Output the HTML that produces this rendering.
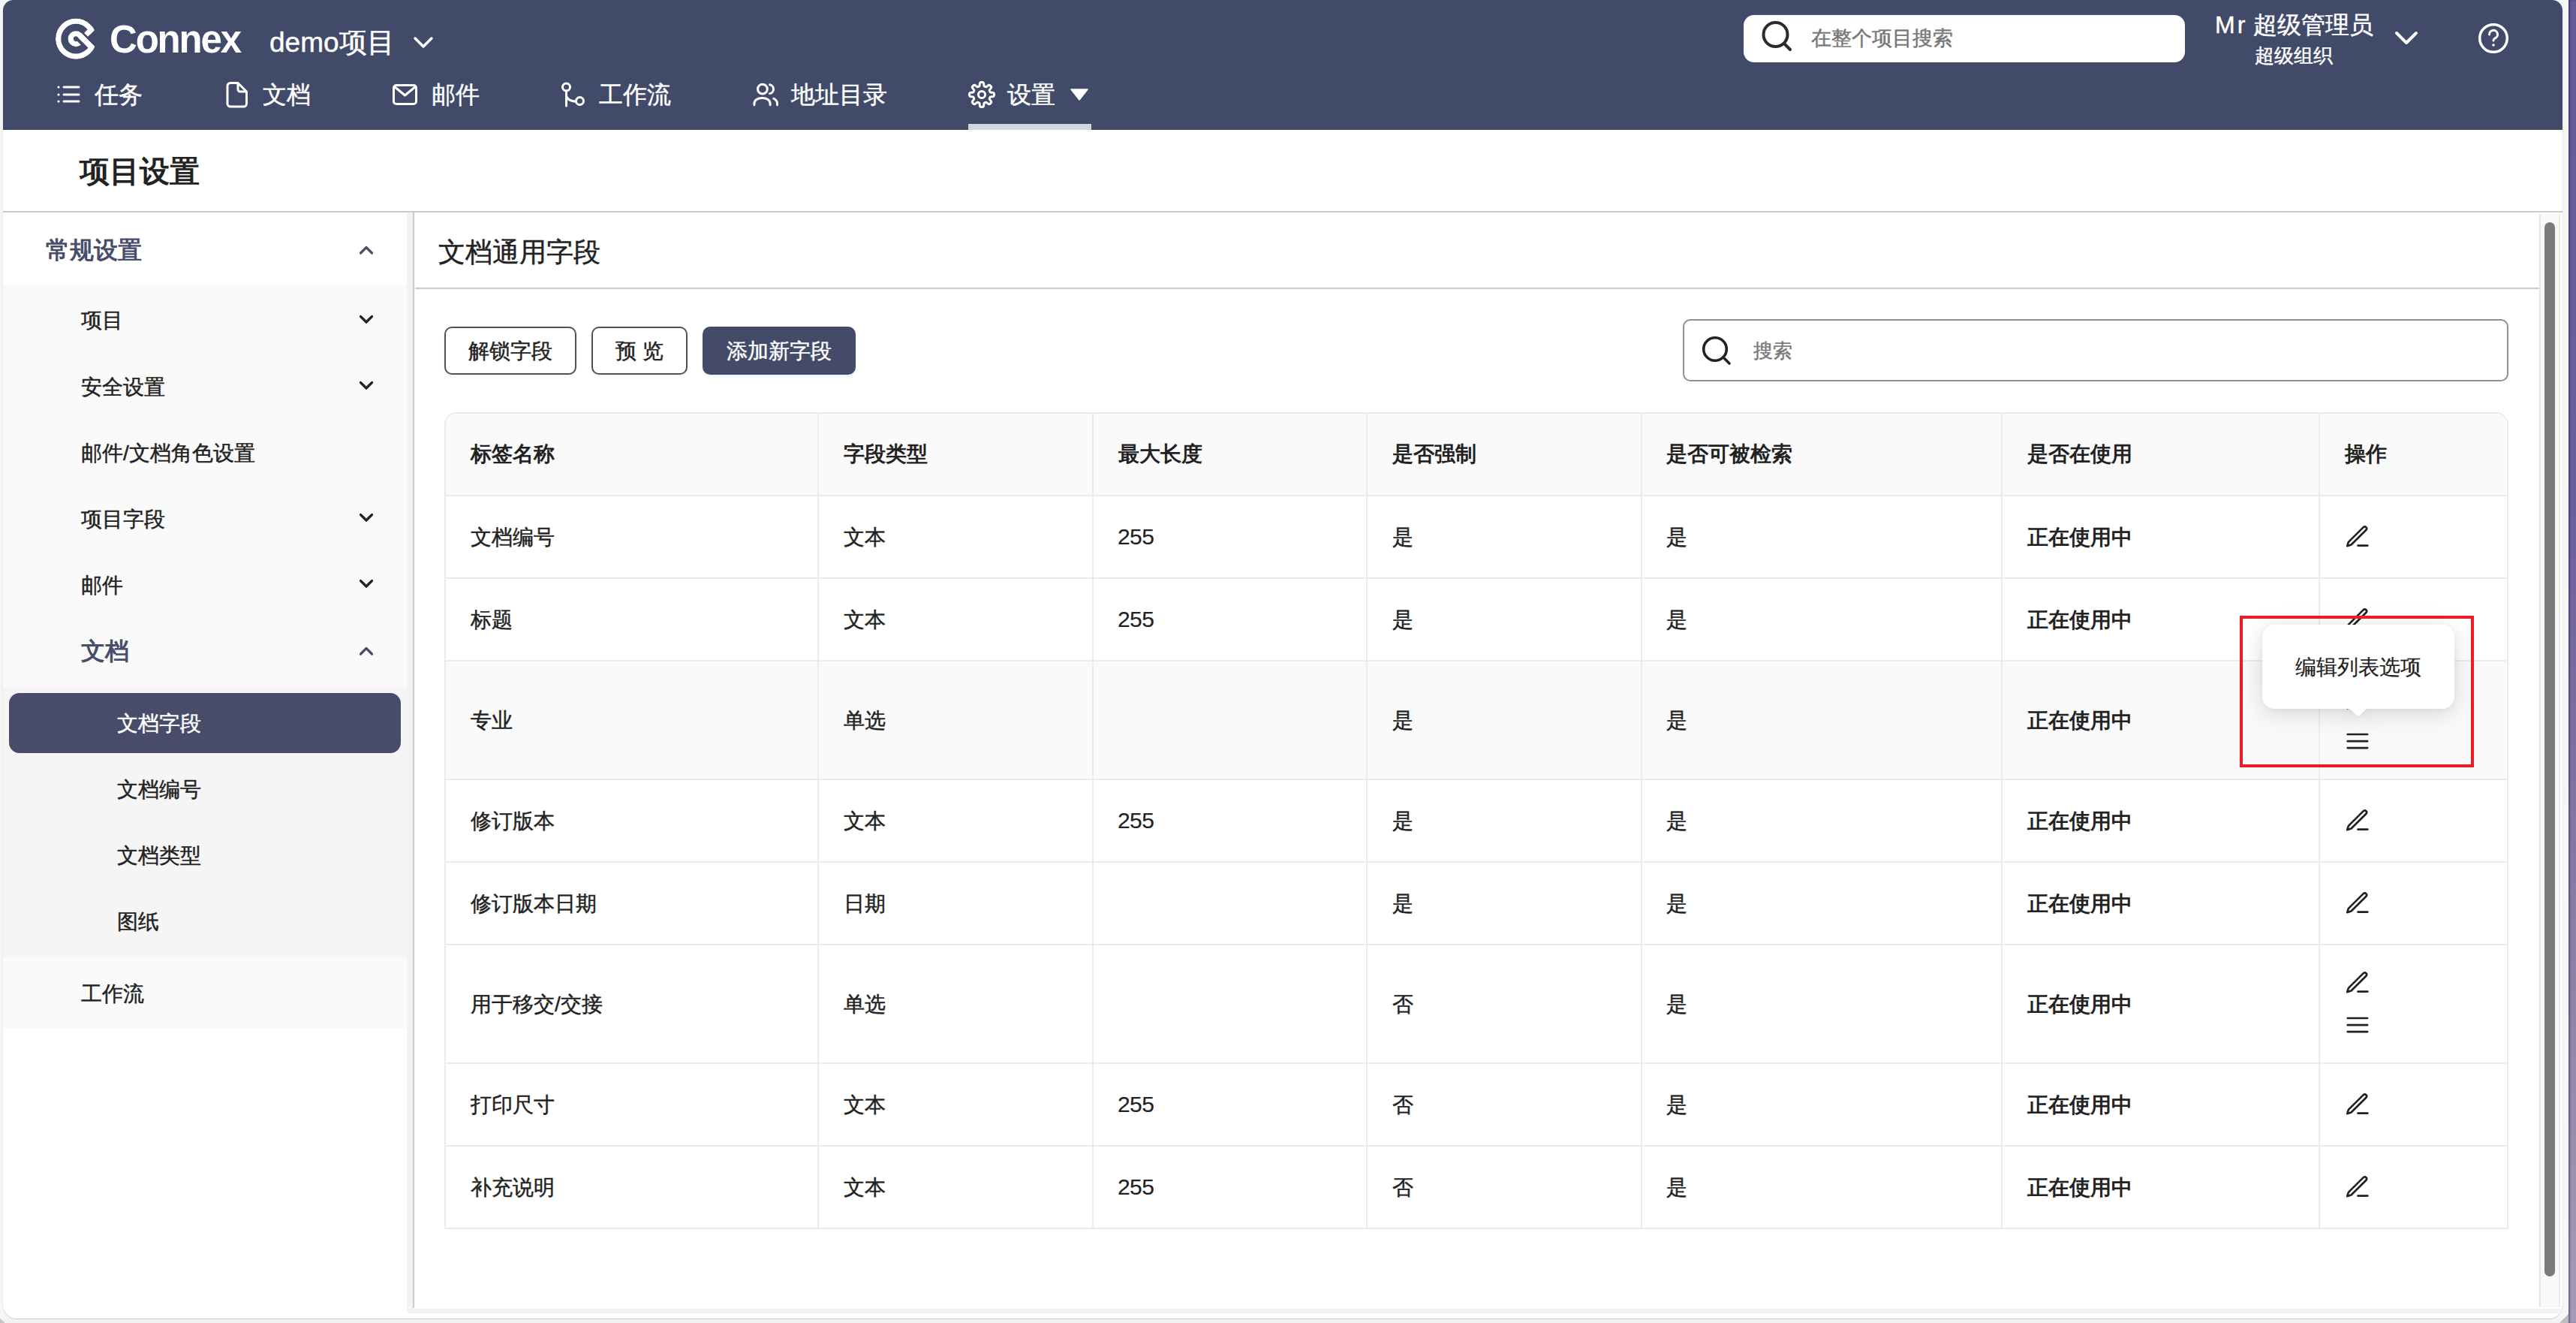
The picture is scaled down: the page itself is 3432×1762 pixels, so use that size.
<!DOCTYPE html>
<html><head><meta charset="utf-8">
<style>
*{box-sizing:border-box;margin:0;padding:0}
html,body{width:3432px;height:1762px;overflow:hidden;background:#f2f2f2;font-family:"Liberation Sans",sans-serif;color:#222}
.a{position:absolute}
.t{position:absolute;white-space:nowrap;line-height:1;-webkit-text-stroke:0.45px currentColor}
.hd,.inuse,.bw{-webkit-text-stroke:0}
#purple{left:3422px;top:0;width:10px;height:1762px;background:linear-gradient(#65599a,#6d609f 40%,#8d83a8 75%,#a49cb6);box-shadow:inset 2px 0 2px rgba(30,20,60,.4)}
#outer{left:0;top:0;width:3422px;height:1756px;background:#f6f6f6}
#win{left:4px;top:0;width:3410px;height:1756px;background:#fff;border-radius:14px 14px 18px 18px;box-shadow:0 1px 1px rgba(0,0,0,.14),0 0 0 1px rgba(0,0,0,.04)}
#hdr{left:4px;top:0;width:3410px;height:173px;background:#414a68;border-radius:14px 14px 0 0}
.w{color:#fff}
.nav{font-size:32px;color:#fff}
.side{font-size:28px;color:#222}
.cell{font-size:28px;color:#222}
.hd{font-size:28px;font-weight:bold;color:#222}
.inuse{font-size:28px;font-weight:bold;color:#222}
.hl{background:#ebebeb}
.num{font-size:30px;letter-spacing:-0.6px;margin-top:-2px;margin-left:-1px;-webkit-text-stroke:0.15px currentColor}
</style></head><body>
<div class="a" id="outer"></div>
<div class="a" id="purple"></div>
<div class="a" id="win"></div>
<div class="a" id="hdr"></div>
<svg class="a" style="left:0;top:1740px" width="20" height="22" viewBox="0 1740 20 22"><polygon points="0,1756 7,1762 0,1762" fill="#c4c4c4"/></svg>
<svg class="a" style="left:3400px;top:1740px" width="32" height="22" viewBox="3400 1740 32 22"><polygon points="3422,1750 3422,1762 3410,1762" fill="#bdbdbd"/></svg>


<!-- logo -->
<svg class="a" style="left:70px;top:20px" width="62" height="64" viewBox="0 0 62 64">
 <defs><clipPath id="lc"><circle cx="0" cy="0" r="27.2"/></clipPath></defs>
 <g transform="translate(31.15 31.7) rotate(45)">
 <g clip-path="url(#lc)">
  <circle cx="0" cy="0" r="23.5" fill="none" stroke="#fff" stroke-width="7.3"/>
  <circle cx="0" cy="0" r="6.9" fill="none" stroke="#fff" stroke-width="7.2"/>
  <rect x="0" y="-3.3" width="20" height="4.3" fill="#414a68"/>
  <rect x="0" y="-10.8" width="30" height="7.6" fill="#fff"/>
  <rect x="2.3" y="-30" width="7.1" height="16.9" fill="#fff"/>
 </g>
  <rect x="0" y="-13.1" width="40" height="2.3" fill="#414a68"/>
  <rect x="9.4" y="-40" width="40" height="29.2" fill="#414a68"/>
 </g>
</svg>
<div class="t w bw" style="left:146px;top:27px;font-size:51px;font-weight:bold;letter-spacing:-2.2px">Connex</div>
<div class="t w" style="left:359px;top:38px;font-size:37px">demo项目</div>
<svg class="a" style="left:550px;top:48px" width="28" height="18" viewBox="0 0 28 18"><path d="M3 3 L14 14 L25 3" fill="none" stroke="#fff" stroke-width="3.5" stroke-linecap="round" stroke-linejoin="round"/></svg>

<!-- header search -->
<div class="a" style="left:2323px;top:20px;width:588px;height:63px;background:#fff;border-radius:14px"></div>
<svg class="a" style="left:2346px;top:27px" width="44" height="44" viewBox="0 0 44 44"><circle cx="19.5" cy="19" r="16" fill="none" stroke="#2b2b2b" stroke-width="4"/><path d="M31 31 L39 39" stroke="#2b2b2b" stroke-width="4" stroke-linecap="round"/></svg>
<div class="t" style="left:2413px;top:37.5px;font-size:26.5px;color:#777">在整个项目搜索</div>

<!-- user -->
<div class="t w" style="left:2951px;top:17px;font-size:32px;letter-spacing:3px">Mr</div>
<div class="t w" style="left:3002px;top:17px;font-size:32px">超级管理员</div>
<div class="t w" style="left:3004px;top:61px;font-size:26px">超级组织</div>
<svg class="a" style="left:3188px;top:39px" width="36" height="24" viewBox="0 0 36 24"><path d="M5 5 L18 18 L31 5" fill="none" stroke="#fff" stroke-width="4" stroke-linecap="round" stroke-linejoin="round"/></svg>
<svg class="a" style="left:3300px;top:29px" width="44" height="44" viewBox="0 0 44 44"><circle cx="22" cy="22" r="18.3" fill="none" stroke="#fff" stroke-width="3.5"/><path d="M16.5 17 a5.5 5.5 0 1 1 7.5 5 c-1.5 .7 -2 1.6 -2 3" fill="none" stroke="#fff" stroke-width="3" stroke-linecap="round"/><circle cx="22" cy="31" r="1.8" fill="#fff"/></svg>

<!-- nav -->
<svg class="a" style="left:74px;top:112px" width="36" height="28" viewBox="0 0 36 28">
 <g fill="#fff"><circle cx="4" cy="4" r="1.6"/><circle cx="4" cy="14" r="1.6"/><circle cx="4" cy="23" r="1.6"/></g>
 <g stroke="#fff" stroke-width="3" stroke-linecap="round"><path d="M11 4 H31"/><path d="M11 14 H31"/><path d="M11 23 H31"/></g>
</svg>
<div class="t nav" style="left:126px;top:110px">任务</div>
<svg class="a" style="left:300px;top:107px" width="32" height="38" viewBox="0 0 32 38"><path d="M7 3.5 H17 L28.5 15 V31 a4 4 0 0 1 -4 4 H7 a4 4 0 0 1 -4 -4 V7.5 a4 4 0 0 1 4 -4 Z M17 3.5 V12 a3 3 0 0 0 3 3 H28.5" fill="none" stroke="#fff" stroke-width="3" stroke-linejoin="round"/></svg>
<div class="t nav" style="left:350px;top:110px">文档</div>
<svg class="a" style="left:521px;top:110px" width="38" height="32" viewBox="0 0 38 32"><rect x="3.5" y="3.5" width="30" height="25" rx="3.5" fill="none" stroke="#fff" stroke-width="3"/><path d="M4 5 L18.5 17 L33 5" fill="none" stroke="#fff" stroke-width="3" stroke-linejoin="round"/></svg>
<div class="t nav" style="left:575px;top:110px">邮件</div>
<svg class="a" style="left:745px;top:107px" width="38" height="38" viewBox="0 0 38 38"><circle cx="9.5" cy="9" r="5" fill="none" stroke="#fff" stroke-width="3"/><circle cx="27.5" cy="27.5" r="5" fill="none" stroke="#fff" stroke-width="3"/><path d="M9.5 14 V34 M10 22 C12 26 16 28 22.5 28" fill="none" stroke="#fff" stroke-width="3" stroke-linecap="round"/></svg>
<div class="t nav" style="left:798px;top:110px">工作流</div>
<svg class="a" style="left:1000px;top:107px" width="40" height="38" viewBox="0 0 40 38"><circle cx="15.9" cy="11.6" r="6.4" fill="none" stroke="#fff" stroke-width="3"/><path d="M4.9 32.8 V31 C4.9 26.3 9.5 23.5 15.5 23.5 C21.5 23.5 26.1 26.3 26.1 31 V32.8" fill="none" stroke="#fff" stroke-width="3" stroke-linecap="round"/><path d="M25.6 5.8 A6 6 0 0 1 25.6 17.6" fill="none" stroke="#fff" stroke-width="3" stroke-linecap="round"/><path d="M30.8 24.2 C33.8 25.8 35.5 28.2 35.5 31 V32.8" fill="none" stroke="#fff" stroke-width="3" stroke-linecap="round"/></svg>
<div class="t nav" style="left:1054px;top:110px">地址目录</div>
<svg class="a" style="left:1287px;top:105px" width="42" height="42" viewBox="0 0 42 42"><path fill="none" stroke="#fff" stroke-width="3" stroke-linejoin="round" d="M21.00 4.50 L21.43 4.51 L21.86 4.55 L22.29 4.63 L22.70 4.78 L23.10 5.09 L23.43 5.68 L23.66 6.67 L23.79 7.87 L23.91 8.86 L24.09 9.46 L24.32 9.79 L24.58 9.99 L24.85 10.13 L25.12 10.26 L25.40 10.38 L25.68 10.49 L25.96 10.59 L26.26 10.68 L26.58 10.72 L26.97 10.65 L27.52 10.36 L28.31 9.74 L29.26 8.99 L30.12 8.45 L30.77 8.27 L31.26 8.33 L31.66 8.51 L32.02 8.76 L32.35 9.04 L32.67 9.33 L32.96 9.65 L33.24 9.98 L33.49 10.34 L33.67 10.74 L33.73 11.23 L33.55 11.88 L33.01 12.74 L32.26 13.69 L31.64 14.48 L31.35 15.03 L31.28 15.42 L31.32 15.74 L31.41 16.04 L31.51 16.32 L31.62 16.60 L31.74 16.88 L31.87 17.15 L32.01 17.42 L32.21 17.68 L32.54 17.91 L33.14 18.09 L34.13 18.21 L35.33 18.34 L36.32 18.57 L36.91 18.90 L37.22 19.30 L37.37 19.71 L37.45 20.14 L37.49 20.57 L37.50 21.00 L37.49 21.43 L37.45 21.86 L37.37 22.29 L37.22 22.70 L36.91 23.10 L36.32 23.43 L35.33 23.66 L34.13 23.79 L33.14 23.91 L32.54 24.09 L32.21 24.32 L32.01 24.58 L31.87 24.85 L31.74 25.12 L31.62 25.40 L31.51 25.68 L31.41 25.96 L31.32 26.26 L31.28 26.58 L31.35 26.97 L31.64 27.52 L32.26 28.31 L33.01 29.26 L33.55 30.12 L33.73 30.77 L33.67 31.26 L33.49 31.66 L33.24 32.02 L32.96 32.35 L32.67 32.67 L32.35 32.96 L32.02 33.24 L31.66 33.49 L31.26 33.67 L30.77 33.73 L30.12 33.55 L29.26 33.01 L28.31 32.26 L27.52 31.64 L26.97 31.35 L26.58 31.28 L26.26 31.32 L25.96 31.41 L25.68 31.51 L25.40 31.62 L25.12 31.74 L24.85 31.87 L24.58 32.01 L24.32 32.21 L24.09 32.54 L23.91 33.14 L23.79 34.13 L23.66 35.33 L23.43 36.32 L23.10 36.91 L22.70 37.22 L22.29 37.37 L21.86 37.45 L21.43 37.49 L21.00 37.50 L20.57 37.49 L20.14 37.45 L19.71 37.37 L19.30 37.22 L18.90 36.91 L18.57 36.32 L18.34 35.33 L18.21 34.13 L18.09 33.14 L17.91 32.54 L17.68 32.21 L17.42 32.01 L17.15 31.87 L16.88 31.74 L16.60 31.62 L16.32 31.51 L16.04 31.41 L15.74 31.32 L15.42 31.28 L15.03 31.35 L14.48 31.64 L13.69 32.26 L12.74 33.01 L11.88 33.55 L11.23 33.73 L10.74 33.67 L10.34 33.49 L9.98 33.24 L9.65 32.96 L9.33 32.67 L9.04 32.35 L8.76 32.02 L8.51 31.66 L8.33 31.26 L8.27 30.77 L8.45 30.12 L8.99 29.26 L9.74 28.31 L10.36 27.52 L10.65 26.97 L10.72 26.58 L10.68 26.26 L10.59 25.96 L10.49 25.68 L10.38 25.40 L10.26 25.12 L10.13 24.85 L9.99 24.58 L9.79 24.32 L9.46 24.09 L8.86 23.91 L7.87 23.79 L6.67 23.66 L5.68 23.43 L5.09 23.10 L4.78 22.70 L4.63 22.29 L4.55 21.86 L4.51 21.43 L4.50 21.00 L4.51 20.57 L4.55 20.14 L4.63 19.71 L4.78 19.30 L5.09 18.90 L5.68 18.57 L6.67 18.34 L7.87 18.21 L8.86 18.09 L9.46 17.91 L9.79 17.68 L9.99 17.42 L10.13 17.15 L10.26 16.88 L10.38 16.60 L10.49 16.32 L10.59 16.04 L10.68 15.74 L10.72 15.42 L10.65 15.03 L10.36 14.48 L9.74 13.69 L8.99 12.74 L8.45 11.88 L8.27 11.23 L8.33 10.74 L8.51 10.34 L8.76 9.98 L9.04 9.65 L9.33 9.33 L9.65 9.04 L9.98 8.76 L10.34 8.51 L10.74 8.33 L11.23 8.27 L11.88 8.45 L12.74 8.99 L13.69 9.74 L14.48 10.36 L15.03 10.65 L15.42 10.72 L15.74 10.68 L16.04 10.59 L16.32 10.49 L16.60 10.38 L16.88 10.26 L17.15 10.13 L17.42 9.99 L17.68 9.79 L17.91 9.46 L18.09 8.86 L18.21 7.87 L18.34 6.67 L18.57 5.68 L18.90 5.09 L19.30 4.78 L19.71 4.63 L20.14 4.55 L20.57 4.51 Z"/><circle cx="21" cy="21" r="4.6" fill="none" stroke="#fff" stroke-width="3"/></svg>
<div class="t nav" style="left:1342px;top:110px">设置</div>
<svg class="a" style="left:1425px;top:117px" width="26" height="18" viewBox="0 0 26 18"><path d="M2 2 H24 L13 16 Z" fill="#fff" stroke="#fff" stroke-width="1.5" stroke-linejoin="round"/></svg>
<div class="a" style="left:1290px;top:165px;width:164px;height:8px;background:#cfd6e0"></div>

<!-- title bar -->
<div class="t bw" style="left:106px;top:208px;font-size:40px;font-weight:bold;color:#222">项目设置</div>
<div class="a" style="left:4px;top:281px;width:3410px;height:2px;background:#c9cbd1"></div>

<!-- sidebar -->
<div class="a" style="left:4px;top:379px;width:538px;height:991px;background:#fafafa"></div>
<div class="a" style="left:4px;top:915px;width:538px;height:360px;background:#f5f5f5"></div>
<div class="t bw" style="left:61px;top:316.5px;font-size:32px;font-weight:bold;color:#474d6b">常规设置</div>
<svg class="a" style="left:476px;top:324px" width="24" height="16" viewBox="0 0 24 16"><path d="M4.5 13 L12 5.5 L19.5 13" fill="none" stroke="#474d6b" stroke-width="3.2" stroke-linecap="round" stroke-linejoin="round"/></svg>

<div class="t side" style="left:108px;top:413px">项目</div>
<div class="t side" style="left:108px;top:502px">安全设置</div>
<div class="t side" style="left:108px;top:590px">邮件/文档角色设置</div>
<div class="t side" style="left:108px;top:678px">项目字段</div>
<div class="t side" style="left:108px;top:765.5px">邮件</div>
<div class="t bw" style="left:108px;top:851px;font-size:32px;font-weight:bold;color:#474d6b">文档</div>
<svg class="a" style="left:476px;top:416px" width="24" height="16" viewBox="0 0 24 16"><path d="M4.5 5.5 L12 13 L19.5 5.5" fill="none" stroke="#222" stroke-width="3.2" stroke-linecap="round" stroke-linejoin="round"/></svg>
<svg class="a" style="left:476px;top:504px" width="24" height="16" viewBox="0 0 24 16"><path d="M4.5 5.5 L12 13 L19.5 5.5" fill="none" stroke="#222" stroke-width="3.2" stroke-linecap="round" stroke-linejoin="round"/></svg>
<svg class="a" style="left:476px;top:680px" width="24" height="16" viewBox="0 0 24 16"><path d="M4.5 5.5 L12 13 L19.5 5.5" fill="none" stroke="#222" stroke-width="3.2" stroke-linecap="round" stroke-linejoin="round"/></svg>
<svg class="a" style="left:476px;top:768px" width="24" height="16" viewBox="0 0 24 16"><path d="M4.5 5.5 L12 13 L19.5 5.5" fill="none" stroke="#222" stroke-width="3.2" stroke-linecap="round" stroke-linejoin="round"/></svg>
<svg class="a" style="left:476px;top:858px" width="24" height="16" viewBox="0 0 24 16"><path d="M4.5 13 L12 5.5 L19.5 13" fill="none" stroke="#474d6b" stroke-width="3.2" stroke-linecap="round" stroke-linejoin="round"/></svg>

<div class="a" style="left:12px;top:923px;width:522px;height:80px;background:#484c69;border-radius:14px"></div>
<div class="t side" style="left:156px;top:950px;color:#fff">文档字段</div>
<div class="t side" style="left:156px;top:1037.5px">文档编号</div>
<div class="t side" style="left:156px;top:1126px">文档类型</div>
<div class="t side" style="left:156px;top:1213.5px">图纸</div>
<div class="t side" style="left:108px;top:1310px">工作流</div>

<!-- content frame -->
<div class="a" style="left:542px;top:283px;width:8px;height:1466px;background:#f3f3f3"></div>
<div class="a" style="left:542px;top:1743px;width:2872px;height:6px;background:#f3f3f3"></div>
<div class="a" style="left:550px;top:283px;width:2px;height:1459px;background:#c9cbd1"></div>

<div class="t" style="left:584px;top:318px;font-size:36px;color:#222">文档通用字段</div>
<div class="a" style="left:553px;top:383px;width:2830px;height:2px;background:#c9cbd1"></div>

<!-- buttons -->
<div class="a" style="left:592px;top:435px;width:176px;height:64px;border:2px solid #505055;border-radius:10px;box-shadow:0 3px 3px rgba(0,0,0,.04)"></div>
<div class="t cell" style="left:624px;top:453.5px">解锁字段</div>
<div class="a" style="left:788px;top:435px;width:128px;height:64px;border:2px solid #505055;border-radius:10px;box-shadow:0 3px 3px rgba(0,0,0,.04)"></div>
<div class="t cell" style="left:820px;top:453.5px">预&nbsp;览</div>
<div class="a" style="left:936px;top:435px;width:204px;height:64px;background:#434b69;border-radius:10px;box-shadow:0 3px 3px rgba(60,100,200,.08)"></div>
<div class="t cell" style="left:968px;top:453.5px;color:#fff">添加新字段</div>

<!-- search -->
<div class="a" style="left:2242px;top:425px;width:1100px;height:83px;border:2px solid #8f8f8f;border-radius:10px"></div>
<svg class="a" style="left:2264px;top:445px" width="46" height="46" viewBox="0 0 46 46"><circle cx="21" cy="20" r="15.3" fill="none" stroke="#222" stroke-width="3.6"/><path d="M31.8 30.8 L40 39" stroke="#222" stroke-width="3.6" stroke-linecap="round"/></svg>
<div class="t" style="left:2336px;top:453.5px;font-size:26px;color:#7a7a7a">搜索</div>

<!-- table -->
<div class="a" style="left:592px;top:549px;width:2750px;height:1088px;border:2px solid #ebebeb;border-radius:16px 16px 0 0;background:#fff;overflow:hidden">
 <div class="a" style="left:0;top:0;width:2745px;height:109px;background:#fafafa"></div>
 <div class="a" style="left:0;top:330px;width:2745px;height:156px;background:#fafafa"></div>
</div>
<div id="grid"></div>
<!-- column lines -->
<div class="a hl" style="left:1089px;top:551px;width:2px;height:1085px"></div>
<div class="a hl" style="left:1455px;top:551px;width:2px;height:1085px"></div>
<div class="a hl" style="left:1820px;top:551px;width:2px;height:1085px"></div>
<div class="a hl" style="left:2186px;top:551px;width:2px;height:1085px"></div>
<div class="a hl" style="left:2666px;top:551px;width:2px;height:1085px"></div>
<div class="a hl" style="left:3089px;top:551px;width:2px;height:1085px"></div>
<!-- row lines -->
<div class="a hl" style="left:594px;top:659px;width:2745px;height:2px"></div>
<div class="a hl" style="left:594px;top:769px;width:2745px;height:2px"></div>
<div class="a hl" style="left:594px;top:879px;width:2745px;height:2px"></div>
<div class="a hl" style="left:594px;top:1037px;width:2745px;height:2px"></div>
<div class="a hl" style="left:594px;top:1147px;width:2745px;height:2px"></div>
<div class="a hl" style="left:594px;top:1257px;width:2745px;height:2px"></div>
<div class="a hl" style="left:594px;top:1415px;width:2745px;height:2px"></div>
<div class="a hl" style="left:594px;top:1525px;width:2745px;height:2px"></div>

<!-- header texts -->
<div class="t hd" style="left:627px;top:591px">标签名称</div>
<div class="t hd" style="left:1124px;top:591px">字段类型</div>
<div class="t hd" style="left:1490px;top:591px">最大长度</div>
<div class="t hd" style="left:1855px;top:591px">是否强制</div>
<div class="t hd" style="left:2220px;top:591px">是否可被检索</div>
<div class="t hd" style="left:2701px;top:591px">是否在使用</div>
<div class="t hd" style="left:3124px;top:591px">操作</div>

<div id="rows"></div>
<div class="t cell" style="left:627px;top:702.0px">文档编号</div>
<div class="t cell" style="left:1124px;top:702.0px">文本</div>
<div class="t cell num" style="left:1490px;top:702.0px">255</div>
<div class="t cell" style="left:1855px;top:702.0px">是</div>
<div class="t cell" style="left:2220px;top:702.0px">是</div>
<div class="t inuse" style="left:2701px;top:702.0px">正在使用中</div>
<svg class="a" style="left:3122px;top:698.0px" width="36" height="34" viewBox="0 0 36 34"><path d="M5.2 29.2 L6.9 23.9 L26.8 4.15 A2.55 2.55 0 0 1 30.4 7.75 L10.5 27.5 Z" fill="none" stroke="#222" stroke-width="2.7" stroke-linejoin="round"/><path d="M19.5 28.6 H32.3" stroke="#222" stroke-width="2.7" stroke-linecap="round"/></svg>
<div class="t cell" style="left:627px;top:812.0px">标题</div>
<div class="t cell" style="left:1124px;top:812.0px">文本</div>
<div class="t cell num" style="left:1490px;top:812.0px">255</div>
<div class="t cell" style="left:1855px;top:812.0px">是</div>
<div class="t cell" style="left:2220px;top:812.0px">是</div>
<div class="t inuse" style="left:2701px;top:812.0px">正在使用中</div>
<svg class="a" style="left:3122px;top:808.0px" width="36" height="34" viewBox="0 0 36 34"><path d="M5.2 29.2 L6.9 23.9 L26.8 4.15 A2.55 2.55 0 0 1 30.4 7.75 L10.5 27.5 Z" fill="none" stroke="#222" stroke-width="2.7" stroke-linejoin="round"/><path d="M19.5 28.6 H32.3" stroke="#222" stroke-width="2.7" stroke-linecap="round"/></svg>
<div class="t cell" style="left:627px;top:946.0px">专业</div>
<div class="t cell" style="left:1124px;top:946.0px">单选</div>
<div class="t cell" style="left:1855px;top:946.0px">是</div>
<div class="t cell" style="left:2220px;top:946.0px">是</div>
<div class="t inuse" style="left:2701px;top:946.0px">正在使用中</div>
<svg class="a" style="left:3122px;top:913.7px" width="36" height="34" viewBox="0 0 36 34"><path d="M5.2 29.2 L6.9 23.9 L26.8 4.15 A2.55 2.55 0 0 1 30.4 7.75 L10.5 27.5 Z" fill="none" stroke="#222" stroke-width="2.7" stroke-linejoin="round"/><path d="M19.5 28.6 H32.3" stroke="#222" stroke-width="2.7" stroke-linecap="round"/></svg>
<svg class="a" style="left:3122px;top:972.5px" width="36" height="30" viewBox="0 0 36 30"><path d="M5.7 5 H32.1 M5.7 14.2 H32.1 M5.7 23.1 H32.1" stroke="#222" stroke-width="2.7" stroke-linecap="round"/></svg>
<div class="t cell" style="left:627px;top:1080.0px">修订版本</div>
<div class="t cell" style="left:1124px;top:1080.0px">文本</div>
<div class="t cell num" style="left:1490px;top:1080.0px">255</div>
<div class="t cell" style="left:1855px;top:1080.0px">是</div>
<div class="t cell" style="left:2220px;top:1080.0px">是</div>
<div class="t inuse" style="left:2701px;top:1080.0px">正在使用中</div>
<svg class="a" style="left:3122px;top:1076.0px" width="36" height="34" viewBox="0 0 36 34"><path d="M5.2 29.2 L6.9 23.9 L26.8 4.15 A2.55 2.55 0 0 1 30.4 7.75 L10.5 27.5 Z" fill="none" stroke="#222" stroke-width="2.7" stroke-linejoin="round"/><path d="M19.5 28.6 H32.3" stroke="#222" stroke-width="2.7" stroke-linecap="round"/></svg>
<div class="t cell" style="left:627px;top:1190.0px">修订版本日期</div>
<div class="t cell" style="left:1124px;top:1190.0px">日期</div>
<div class="t cell" style="left:1855px;top:1190.0px">是</div>
<div class="t cell" style="left:2220px;top:1190.0px">是</div>
<div class="t inuse" style="left:2701px;top:1190.0px">正在使用中</div>
<svg class="a" style="left:3122px;top:1186.0px" width="36" height="34" viewBox="0 0 36 34"><path d="M5.2 29.2 L6.9 23.9 L26.8 4.15 A2.55 2.55 0 0 1 30.4 7.75 L10.5 27.5 Z" fill="none" stroke="#222" stroke-width="2.7" stroke-linejoin="round"/><path d="M19.5 28.6 H32.3" stroke="#222" stroke-width="2.7" stroke-linecap="round"/></svg>
<div class="t cell" style="left:627px;top:1324.0px">用于移交/交接</div>
<div class="t cell" style="left:1124px;top:1324.0px">单选</div>
<div class="t cell" style="left:1855px;top:1324.0px">否</div>
<div class="t cell" style="left:2220px;top:1324.0px">是</div>
<div class="t inuse" style="left:2701px;top:1324.0px">正在使用中</div>
<svg class="a" style="left:3122px;top:1291.7px" width="36" height="34" viewBox="0 0 36 34"><path d="M5.2 29.2 L6.9 23.9 L26.8 4.15 A2.55 2.55 0 0 1 30.4 7.75 L10.5 27.5 Z" fill="none" stroke="#222" stroke-width="2.7" stroke-linejoin="round"/><path d="M19.5 28.6 H32.3" stroke="#222" stroke-width="2.7" stroke-linecap="round"/></svg>
<svg class="a" style="left:3122px;top:1350.5px" width="36" height="30" viewBox="0 0 36 30"><path d="M5.7 5 H32.1 M5.7 14.2 H32.1 M5.7 23.1 H32.1" stroke="#222" stroke-width="2.7" stroke-linecap="round"/></svg>
<div class="t cell" style="left:627px;top:1458.0px">打印尺寸</div>
<div class="t cell" style="left:1124px;top:1458.0px">文本</div>
<div class="t cell num" style="left:1490px;top:1458.0px">255</div>
<div class="t cell" style="left:1855px;top:1458.0px">否</div>
<div class="t cell" style="left:2220px;top:1458.0px">是</div>
<div class="t inuse" style="left:2701px;top:1458.0px">正在使用中</div>
<svg class="a" style="left:3122px;top:1454.0px" width="36" height="34" viewBox="0 0 36 34"><path d="M5.2 29.2 L6.9 23.9 L26.8 4.15 A2.55 2.55 0 0 1 30.4 7.75 L10.5 27.5 Z" fill="none" stroke="#222" stroke-width="2.7" stroke-linejoin="round"/><path d="M19.5 28.6 H32.3" stroke="#222" stroke-width="2.7" stroke-linecap="round"/></svg>
<div class="t cell" style="left:627px;top:1568.0px">补充说明</div>
<div class="t cell" style="left:1124px;top:1568.0px">文本</div>
<div class="t cell num" style="left:1490px;top:1568.0px">255</div>
<div class="t cell" style="left:1855px;top:1568.0px">否</div>
<div class="t cell" style="left:2220px;top:1568.0px">是</div>
<div class="t inuse" style="left:2701px;top:1568.0px">正在使用中</div>
<svg class="a" style="left:3122px;top:1564.0px" width="36" height="34" viewBox="0 0 36 34"><path d="M5.2 29.2 L6.9 23.9 L26.8 4.15 A2.55 2.55 0 0 1 30.4 7.75 L10.5 27.5 Z" fill="none" stroke="#222" stroke-width="2.7" stroke-linejoin="round"/><path d="M19.5 28.6 H32.3" stroke="#222" stroke-width="2.7" stroke-linecap="round"/></svg>
<!-- tooltip -->
<svg class="a" style="left:2984px;top:800px;overflow:visible;filter:drop-shadow(0 6px 16px rgba(0,0,0,.14)) drop-shadow(0 1px 3px rgba(0,0,0,.05))" width="312" height="180" viewBox="2984 800 312 180"><path d="M3030 832 H3254 a16 16 0 0 1 16 16 V928 a16 16 0 0 1 -16 16 H3153 L3143.5 953 a2.5 2.5 0 0 1 -3.5 0 L3130.5 944 H3030 a16 16 0 0 1 -16 -16 V848 a16 16 0 0 1 16 -16 Z" fill="#fff"/></svg>
<div class="t" style="left:3058px;top:875px;font-size:28px;color:#222;-webkit-text-stroke:0.2px #222">编辑列表选项</div>
<div class="a" style="left:2984px;top:820px;width:312px;height:202px;border:4px solid #eb1c26"></div>

<!-- scrollbar -->
<div class="a" style="left:3383px;top:285px;width:28px;height:1456px;background:#f9f9f9;border-left:2px solid #e6e6e6;border-right:2px solid #ececec"></div>
<div class="a" style="left:3390px;top:296px;width:14px;height:1404px;background:#7b7b7b;border-radius:7px"></div>

</body></html>
